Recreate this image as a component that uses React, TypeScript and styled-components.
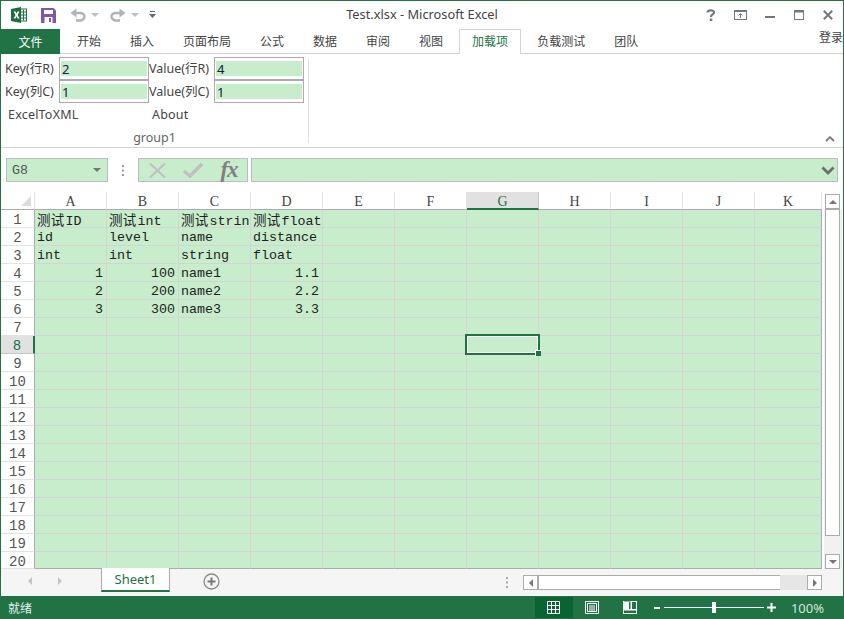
import styled, { createGlobalStyle } from "styled-components"

const GREEN = "#217346"
const CELL = "#c7edcc"
const EDGE = "#ababab"
const LINE = "#d4d4d4"

const GlobalStyle = createGlobalStyle`
  html, body {
    margin: 0;
    padding: 0;
    background: #fff;
    overflow: hidden;
  }
`

const Window = styled.div`
  box-sizing: border-box;
  width: 844px;
  height: 619px;
  display: flex;
  flex-direction: column;
  border: 1px solid ${GREEN};
  border-bottom: 0;
  background: #fff;
  overflow: hidden;
  font-family: "Noto Sans", "Noto Sans CJK SC", sans-serif;
  font-size: 12px;
  color: #444;
`

/* title bar */
const TitleBar = styled.div`
  position: relative;
  flex: none;
  height: 28px;
  display: flex;
  align-items: center;
  padding-left: 10px;
`
const Quick = styled.div`
  display: flex;
  align-items: center;
`
const QuickSlot = styled.div<{ $w: number }>`
  width: ${(p) => p.$w}px;
  height: 28px;
  display: flex;
  align-items: center;
`
const Title = styled.div`
  position: absolute;
  left: 0;
  right: 0;
  top: 5px;
  text-align: center;
  font-size: 12.8px;
  line-height: 17px;
  color: #444;
`
const WinButtons = styled.div`
  margin-left: auto;
  display: flex;
  align-items: center;
`
const WinButton = styled.div`
  width: 29.4px;
  height: 28px;
  display: flex;
  align-items: center;
  justify-content: center;
`

/* tab strip */
const TabStrip = styled.div`
  position: relative;
  flex: none;
  box-sizing: border-box;
  height: 25px;
  display: flex;
  gap: 1px;
  border-bottom: 1px solid ${LINE};
`
const FileTab = styled.div`
  width: 59px;
  height: 25px;
  margin-right: 2px;
  background: ${GREEN};
  color: #fff;
  display: flex;
  align-items: center;
  justify-content: center;
`
const Tab = styled.div<{ $active?: boolean }>`
  box-sizing: border-box;
  height: ${(p) => (p.$active ? 25 : 24)}px;
  padding: 0 ${(p) => (p.$active ? 12 : 14)}px;
  display: flex;
  align-items: center;
  position: relative;
  background: #fff;
  color: ${(p) => (p.$active ? GREEN : "#444")};
  border: 1px solid ${(p) => (p.$active ? LINE : "transparent")};
  border-bottom: 0;
  margin: 0 ${(p) => (p.$active ? 1 : -1)}px;
  line-height: 24px;
`
const Login = styled.div`
  position: absolute;
  right: -1px;
  top: 0;
  width: 25px;
  overflow: hidden;
  white-space: nowrap;
  line-height: 17px;
`

/* ribbon */
const Ribbon = styled.div`
  position: relative;
  flex: none;
  box-sizing: border-box;
  height: 94px;
  border-bottom: 1px solid ${LINE};
  padding-top: 4px;
  font-size: 12.5px;
`
const Group = styled.div`
  box-sizing: border-box;
  width: 308px;
  height: 85px;
  border-right: 1px solid #e1e1e1;
  display: flex;
  flex-direction: column;
`
const FieldRows = styled.div`
  display: grid;
  grid-template-columns: 58px 90px 65px 90px;
  grid-auto-rows: 23px;
  margin-top: -1px;
`
const FieldLabel = styled.div<{ $indent: number }>`
  padding-left: ${(p) => p.$indent}px;
  line-height: 23px;
  white-space: nowrap;
`
const FieldBox = styled.div`
  box-sizing: border-box;
  border: 1px solid ${EDGE};
  padding: 3px 1px 3px 1px;
  background: #fff;
`
const FieldValue = styled.div`
  height: 15px;
  background: ${CELL};
  padding-left: 1px;
  font-size: 13px;
  line-height: 16px;
  color: #123;
`
const Actions = styled.div`
  display: flex;
  margin-top: 3px;
  height: 18px;
  line-height: 18px;
  letter-spacing: 0.2px;
`
const ActionButton = styled.div<{ $w: number; $indent: number }>`
  width: ${(p) => p.$w}px;
  padding-left: ${(p) => p.$indent}px;
  box-sizing: border-box;
`
const GroupName = styled.div`
  margin-top: 6px;
  text-align: center;
  color: #666;
  line-height: 16px;
`
const Collapse = styled.div`
  position: absolute;
  right: 8px;
  bottom: 5px;
  display: flex;
`

/* formula bar */
const FormulaBar = styled.div`
  flex: none;
  box-sizing: border-box;
  height: 44px;
  padding: 10px 5px 10px 5px;
  display: flex;
  align-items: stretch;
`
const Boxed = styled.div`
  box-sizing: border-box;
  border: 1px solid #bdbdbd;
  background: ${CELL};
  display: flex;
  align-items: center;
`
const NameBox = styled(Boxed)`
  width: 102px;
  padding: 0 6px 0 5px;
  justify-content: space-between;
  font-family: "Liberation Mono", monospace;
  font-size: 13.33px;
  color: #555;
`
const Grip = styled.div`
  width: 30px;
  display: flex;
  align-items: center;
  justify-content: center;
`
const FormulaButtons = styled(Boxed)`
  width: 110px;
`
const FxButton = styled.div`
  width: 36px;
  display: flex;
  justify-content: center;
  align-items: center;
`
const FxText = styled.span`
  font-family: "Liberation Serif", serif;
  font-style: italic;
  font-weight: 700;
  font-size: 23px;
  line-height: 22px;
  color: #808080;
  letter-spacing: -1px;
`
const FormulaInput = styled(Boxed)`
  flex: 1;
  margin-left: 3px;
  justify-content: flex-end;
  padding-right: 2px;
`

/* sheet */
const SheetArea = styled.div`
  flex: none;
  height: 377px;
  display: flex;
`
const SheetGrid = styled.div`
  display: grid;
  grid-template-columns: 34px repeat(10, 72px) 67px;
  grid-template-rows: repeat(20, 18px) 17px;
  width: 821px;
  flex: none;
  font-family: "Liberation Mono", "Noto Sans CJK SC", monospace;
  font-size: 13.33px;
  color: #222;
`
const Corner = styled.div`
  box-sizing: border-box;
  border-right: 1px solid #e0e0e0;
  border-bottom: 1px solid ${EDGE};
  display: flex;
  justify-content: flex-end;
  align-items: flex-end;
  padding: 0 3px 3px 0;
`
const ColHead = styled.div<{ $active?: boolean }>`
  box-sizing: border-box;
  text-align: center;
  font-family: "Liberation Serif", serif;
  font-size: 14px;
  line-height: 14px;
  padding-top: 3px;
  color: ${(p) => (p.$active ? GREEN : "#444")};
  background: ${(p) => (p.$active ? "#e1e1e1" : "#fff")};
  border-bottom: ${(p) => (p.$active ? `2px solid ${GREEN}` : `1px solid ${EDGE}`)};
  border-right: 1px solid ${(p) => (p.$active ? "#c6c6c6" : "#e3e3e3")};
`
const RowHead = styled.div<{ $active?: boolean }>`
  box-sizing: border-box;
  text-align: center;
  font-size: 14px;
  line-height: 14px;
  padding-top: 3px;
  color: ${(p) => (p.$active ? GREEN : "#555")};
  background: ${(p) => (p.$active ? "#e1e1e1" : "#fff")};
  border-right: ${(p) => (p.$active ? `2px solid ${GREEN}` : `1px solid ${EDGE}`)};
  border-bottom: 1px solid ${(p) => (p.$active ? "#c6c6c6" : "#e3e3e3")};
`
const Cell = styled.div<{ $right?: boolean; $lastCol?: boolean; $lastRow?: boolean }>`
  position: relative;
  box-sizing: border-box;
  background: ${CELL};
  border-right: 1px solid ${(p) => (p.$lastCol ? EDGE : LINE)};
  border-bottom: 1px solid ${(p) => (p.$lastRow ? EDGE : LINE)};
  line-height: 14px;
  white-space: nowrap;
  padding: ${(p) => (p.$right ? "3px 3px 0 0" : "3px 0 0 2px")};
  text-align: ${(p) => (p.$right ? "right" : "left")};
`
const Cjk = styled.span`
  font-family: "Noto Sans CJK SC", sans-serif;
  font-size: 13.5px;
  line-height: 1;
  letter-spacing: 0.25px;
  margin-right: 1px;
`
const Selection = styled.div`
  position: absolute;
  left: -2px;
  top: -2px;
  width: 75px;
  height: 21px;
  box-sizing: border-box;
  border: 2px solid ${GREEN};
  outline: 1px solid #fff;
  outline-offset: -3px;
  z-index: 2;
  &::after {
    content: "";
    position: absolute;
    right: -3px;
    bottom: -3px;
    width: 5px;
    height: 5px;
    background: ${GREEN};
    border: 1px solid #fff;
    border-width: 1px 0 0 1px;
  }
`

/* vertical scrollbar */
const VScroll = styled.div`
  width: 21px;
  display: flex;
  flex-direction: column;
  padding: 2px 0 0 3px;
  box-sizing: border-box;
`
const ScrollTrack = styled.div`
  width: 15px;
  flex: 1;
  display: flex;
  flex-direction: column;
  background: #f1f1f1;
  box-shadow: -1px 0 0 #f1f1f1, 2px 0 0 #f1f1f1;
`
const ScrollThumb = styled.div`
  box-sizing: border-box;
  height: 327px;
  border: 1px solid ${EDGE};
  background: #fff;
`
const ScrollBtn = styled.div`
  box-sizing: border-box;
  width: 15px;
  height: 15px;
  border: 1px solid ${EDGE};
  background: #fff;
  flex: none;
  display: flex;
  align-items: center;
  justify-content: center;
`
const Spacer = styled.div`
  flex: 1;
`

/* sheet tabs */
const SheetBar = styled.div`
  flex: none;
  height: 27px;
  background: #f5f5f5;
  display: flex;
  align-items: flex-start;
  position: relative;
`
const NavArrows = styled.div`
  width: 100px;
  height: 24px;
  display: flex;
  align-items: center;
  padding-left: 26px;
  gap: 24px;
  box-sizing: border-box;
`
const SheetTab = styled.div`
  box-sizing: border-box;
  width: 69px;
  height: 24px;
  background: #fff;
  border-left: 1px solid ${EDGE};
  border-right: 1px solid ${EDGE};
  border-bottom: 2px solid ${GREEN};
  color: ${GREEN};
  font-size: 13px;
  line-height: 22px;
  text-align: center;
  margin-top: -1px;
`
const AddSheet = styled.div`
  width: 42px;
  margin-left: 33px;
  height: 24px;
  display: flex;
  align-items: center;
`
const HScrollWrap = styled.div`
  margin-left: auto;
  margin-right: 21px;
  display: flex;
  align-items: center;
  margin-top: 6px;
`
const HGrip = styled.div`
  width: 17px;
  height: 15px;
  display: flex;
  align-items: center;
`
const HScroll = styled.div`
  box-sizing: border-box;
  width: 299px;
  height: 15px;
  display: flex;
  background: #e6e6e6;
`
const HThumb = styled.div`
  box-sizing: border-box;
  width: 242px;
  height: 15px;
  background: #fff;
  border: 1px solid ${EDGE};
  border-right: 0;
`

/* status bar */
const StatusBar = styled.div`
  flex: none;
  height: 23px;
  margin: 0 -1px;
  background: ${GREEN};
  color: #fff;
  display: flex;
  align-items: center;
  padding-left: 8px;
`
const StatusText = styled.div`
  color: #e4efe9;
`
const StatusRight = styled.div`
  margin-left: auto;
  display: flex;
  align-items: center;
  height: 23px;
  padding-right: 20px;
`
const ViewButton = styled.div<{ $active?: boolean }>`
  width: 38px;
  height: 21px;
  display: flex;
  align-items: center;
  justify-content: center;
  background: ${(p) => (p.$active ? "#0a6332" : "transparent")};
`
const ZoomRow = styled.div`
  display: flex;
  align-items: center;
  margin-left: 4px;
`
const ZoomLine = styled.div`
  position: relative;
  width: 100px;
  height: 1px;
  margin: 0 3px 0 3px;
  background: #fff;
`
const ZoomThumb = styled.div`
  position: absolute;
  left: 48px;
  top: -5px;
  width: 4px;
  height: 11px;
  background: #fff;
`
const ZoomPercent = styled.div`
  margin-left: 15px;
  font-size: 13px;
  color: #d5e5dc;
`

const columns = ["A", "B", "C", "D", "E", "F", "G", "H", "I", "J", "K"]

type CellValue = { text: string; cjk?: string; right?: boolean }

const sheet: Record<string, CellValue> = {
  A1: { cjk: "测试", text: "ID" },
  B1: { cjk: "测试", text: "int" },
  C1: { cjk: "测试", text: "strin" },
  D1: { cjk: "测试", text: "float" },
  A2: { text: "id" },
  B2: { text: "level" },
  C2: { text: "name" },
  D2: { text: "distance" },
  A3: { text: "int" },
  B3: { text: "int" },
  C3: { text: "string" },
  D3: { text: "float" },
  A4: { text: "1", right: true },
  B4: { text: "100", right: true },
  C4: { text: "name1" },
  D4: { text: "1.1", right: true },
  A5: { text: "2", right: true },
  B5: { text: "200", right: true },
  C5: { text: "name2" },
  D5: { text: "2.2", right: true },
  A6: { text: "3", right: true },
  B6: { text: "300", right: true },
  C6: { text: "name3" },
  D6: { text: "3.3", right: true },
}

const ribbonTabs = ["开始", "插入", "页面布局", "公式", "数据", "审阅", "视图", "加载项", "负载测试", "团队"]
const rowNumbers = Array.from({ length: 20 }, (_, i) => i + 1)

function Triangle({ dir, color = "#777" }: { dir: "up" | "down" | "left" | "right"; color?: string }) {
  const points = {
    up: "0,5 8,5 4,1",
    down: "0,1 8,1 4,5",
    left: "5,0 5,8 1,4",
    right: "1,0 1,8 5,4",
  }[dir]
  const size = dir === "up" || dir === "down" ? { w: 8, h: 6 } : { w: 6, h: 8 }
  return (
    <svg width={size.w} height={size.h} viewBox={`0 0 ${size.w} ${size.h}`}>
      <polygon points={points} fill={color} />
    </svg>
  )
}

function ExcelLogo() {
  return (
    <svg width="16" height="16" viewBox="0 0 16 16">
      <rect x="7" y="2" width="8.500" height="12" fill="#fff" stroke="#217346" />
      <path d="M10 5h5M10 8h5M10 11h5M12.500 2.500v11" stroke="#217346" strokeWidth="1" />
      <path d="M0 2 10 0v16L0 14z" fill="#1a6e42" />
      <path d="M2.600 4.600h2l1 2 1-2h1.900L6.700 8l1.900 3.400H6.600L5.500 9.200l-1 2.200H2.600L4.500 8z" fill="#fff" />
    </svg>
  )
}

function SaveIcon() {
  return (
    <svg width="15" height="15" viewBox="0 0 15 15">
      <path d="M0 0h12.500L15 2.500V15H0z" fill="#7e57a5" />
      <rect x="3" y="2" width="9" height="4" fill="#fff" />
      <rect x="3.500" y="9" width="8" height="6" fill="#fff" />
      <rect x="8" y="10" width="2" height="4" fill="#7e57a5" />
    </svg>
  )
}

function UndoIcon({ flip }: { flip?: boolean }) {
  return (
    <svg width="16" height="14" viewBox="0 0 16 14" style={flip ? { transform: "scaleX(-1)" } : undefined}>
      <path d="M2 5h8c3 0 4.500 1.500 4.500 3.500S12.500 12.500 10 12.500H6" fill="none" stroke="#b3b3b3" strokeWidth="2.400" />
      <path d="M6.500 0.500v9L0.500 5z" fill="#b3b3b3" />
    </svg>
  )
}

function App() {
  return (
    <Window>
      <GlobalStyle />
      <TitleBar>
        <Quick>
          <QuickSlot $w={30}>
            <ExcelLogo />
          </QuickSlot>
          <QuickSlot $w={29}>
            <SaveIcon />
          </QuickSlot>
          <QuickSlot $w={21}>
            <UndoIcon />
          </QuickSlot>
          <QuickSlot $w={19}>
            <Triangle dir="down" color="#bdbdbd" />
          </QuickSlot>
          <QuickSlot $w={21}>
            <UndoIcon flip />
          </QuickSlot>
          <QuickSlot $w={18}>
            <Triangle dir="down" color="#bdbdbd" />
          </QuickSlot>
          <QuickSlot $w={10}>
            <svg width="7" height="8" viewBox="0 0 7 8">
              <path d="M1 0.500h5" stroke="#666" />
              <polygon points="0,3 7,3 3.500,7" fill="#666" />
            </svg>
          </QuickSlot>
        </Quick>
        <Title>Test.xlsx - Microsoft Excel</Title>
        <WinButtons>
          <WinButton>
            <svg width="10" height="12" viewBox="0 0 10 12">
              <path d="M1.500 3.500C1.500 1 8 0.500 8 3.500 8 5.500 5 5.500 5 8" fill="none" stroke="#777" strokeWidth="2.200" />
              <rect x="3.800" y="9.500" width="2.500" height="2.500" fill="#777" />
            </svg>
          </WinButton>
          <WinButton>
            <svg width="13" height="10" viewBox="0 0 13 10">
              <rect x="0.500" y="0.500" width="12" height="9" fill="none" stroke="#777" />
              <path d="M1 1.500h11" stroke="#777" />
              <path d="M6.500 8V4M4.500 5.500l2-2 2 2" fill="none" stroke="#777" />
            </svg>
          </WinButton>
          <WinButton>
            <svg width="10" height="12" viewBox="0 0 10 12">
              <rect x="0" y="7" width="10" height="2" fill="#777" />
            </svg>
          </WinButton>
          <WinButton>
            <svg width="10" height="10" viewBox="0 0 10 10">
              <rect x="0.500" y="0.500" width="9" height="9" fill="none" stroke="#777" />
              <rect x="0" y="0" width="10" height="2.500" fill="#777" />
            </svg>
          </WinButton>
          <WinButton>
            <svg width="10" height="10" viewBox="0 0 10 10">
              <path d="M0.800 0.800 9.200 9.200M9.200 0.800 0.800 9.200" stroke="#777" strokeWidth="2" />
            </svg>
          </WinButton>
        </WinButtons>
      </TitleBar>

      <TabStrip>
        <FileTab>文件</FileTab>
        {ribbonTabs.map((t) => (
          <Tab key={t} $active={t === "加载项"}>
            {t}
          </Tab>
        ))}
        <Login>登录</Login>
      </TabStrip>

      <Ribbon>
        <Group>
          <FieldRows>
            <FieldLabel $indent={4}>Key(行R)</FieldLabel>
            <FieldBox>
              <FieldValue>2</FieldValue>
            </FieldBox>
            <FieldLabel $indent={0}>Value(行R)</FieldLabel>
            <FieldBox>
              <FieldValue>4</FieldValue>
            </FieldBox>
            <FieldLabel $indent={4}>Key(列C)</FieldLabel>
            <FieldBox>
              <FieldValue>1</FieldValue>
            </FieldBox>
            <FieldLabel $indent={0}>Value(列C)</FieldLabel>
            <FieldBox>
              <FieldValue>1</FieldValue>
            </FieldBox>
          </FieldRows>
          <Actions>
            <ActionButton $w={151} $indent={7}>
              ExcelToXML
            </ActionButton>
            <ActionButton $w={60} $indent={0}>
              About
            </ActionButton>
          </Actions>
          <GroupName>group1</GroupName>
        </Group>
        <Collapse>
          <svg width="10" height="6" viewBox="0 0 10 6">
            <path d="M1 5 5 1.200 9 5" fill="none" stroke="#777" strokeWidth="1.800" />
          </svg>
        </Collapse>
      </Ribbon>

      <FormulaBar>
        <NameBox>
          G8
          <Triangle dir="down" color="#777" />
        </NameBox>
        <Grip>
          <svg width="3" height="11" viewBox="0 0 3 11">
            <path d="M0 0h2v2H0zM0 4.500h2v2H0zM0 9h2v2H0z" fill="#999" />
          </svg>
        </Grip>
        <FormulaButtons>
          <FxButton>
            <svg width="17" height="15" viewBox="0 0 17 15">
              <path d="M1 0.500 16 14.500M16 0.500 1 14.500" stroke="#c0c0c0" strokeWidth="2" />
            </svg>
          </FxButton>
          <FxButton>
            <svg width="20" height="15" viewBox="0 0 20 15">
              <path d="M1 8l6 5L19 1" fill="none" stroke="#c0c0c0" strokeWidth="3.500" />
            </svg>
          </FxButton>
          <FxButton>
            <FxText>fx</FxText>
          </FxButton>
        </FormulaButtons>
        <FormulaInput>
          <svg width="14" height="9" viewBox="0 0 14 9">
            <path d="M1.500 1.500 7 7l5.500-5.500" fill="none" stroke="#6e6e6e" strokeWidth="2.800" />
          </svg>
        </FormulaInput>
      </FormulaBar>

      <SheetArea>
        <SheetGrid>
          <Corner>
            <svg width="10" height="10" viewBox="0 0 10 10">
              <polygon points="10,0 10,10 0,10" fill="#dcdcdc" />
            </svg>
          </Corner>
          {columns.map((c) => (
            <ColHead key={c} $active={c === "G"}>
              {c}
            </ColHead>
          ))}
          {rowNumbers.map((row) => [
            <RowHead key={`h${row}`} $active={row === 8}>
              {row}
            </RowHead>,
            ...columns.map((c) => {
              const value = sheet[`${c}${row}`]
              return (
                <Cell key={`${c}${row}`} $right={value?.right} $lastCol={c === "K"} $lastRow={row === 20}>
                  {value?.cjk && <Cjk>{value.cjk}</Cjk>}
                  {value?.text}
                  {c === "G" && row === 8 && <Selection />}
                </Cell>
              )
            }),
          ])}
        </SheetGrid>
        <VScroll>
          <ScrollBtn>
            <Triangle dir="up" />
          </ScrollBtn>
          <ScrollTrack>
            <ScrollThumb />
            <Spacer />
            <ScrollBtn>
              <Triangle dir="down" />
            </ScrollBtn>
          </ScrollTrack>
        </VScroll>
      </SheetArea>

      <SheetBar>
        <NavArrows>
          <Triangle dir="left" color="#c4c4c4" />
          <Triangle dir="right" color="#c4c4c4" />
        </NavArrows>
        <SheetTab>Sheet1</SheetTab>
        <AddSheet>
          <svg width="17" height="17" viewBox="0 0 17 17">
            <circle cx="8.500" cy="8.500" r="7.500" fill="none" stroke="#8a8a8a" strokeWidth="1.300" />
            <path d="M8.500 4.500v8M4.500 8.500h8" stroke="#777" strokeWidth="2" />
          </svg>
        </AddSheet>
        <HScrollWrap>
          <HGrip>
            <svg width="3" height="11" viewBox="0 0 3 11">
              <path d="M0 0h2v2H0zM0 4.500h2v2H0zM0 9h2v2H0z" fill="#aaa" />
            </svg>
          </HGrip>
          <HScroll>
            <ScrollBtn>
              <Triangle dir="left" />
            </ScrollBtn>
            <HThumb />
            <Spacer />
            <ScrollBtn>
              <Triangle dir="right" />
            </ScrollBtn>
          </HScroll>
        </HScrollWrap>
      </SheetBar>

      <StatusBar>
        <StatusText>就绪</StatusText>
        <StatusRight>
          <ViewButton $active>
            <svg width="13" height="13" viewBox="0 0 13 13">
              <path d="M0.500 0.500h12v12h-12zM0.500 4.500h12M0.500 8.500h12M4.500 0.500v12M8.500 0.500v12" fill="none" stroke="#fff" />
            </svg>
          </ViewButton>
          <ViewButton>
            <svg width="14" height="13" viewBox="0 0 14 13">
              <path d="M0.500 0.500h13v12h-13z" fill="none" stroke="#fff" />
              <path d="M2.500 2.500h9v8h-9zM4 5h6M4 7h6M4 9h6" fill="none" stroke="#fff" />
            </svg>
          </ViewButton>
          <ViewButton>
            <svg width="14" height="13" viewBox="0 0 14 13">
              <path d="M0 0h14v13H0z" fill="#fff" />
              <path d="M6 0.500h1.500V8H1v-7.500zM9 1h4v7H9z" fill={GREEN} />
              <path d="M1 1h5v7H1z" fill="#fff" />
              <path d="M1 9.500h12V12H1z" fill={GREEN} />
            </svg>
          </ViewButton>
          <ZoomRow>
            <svg width="8" height="8" viewBox="0 0 8 8">
              <rect x="1" y="3" width="6" height="2" fill="#fff" />
            </svg>
            <ZoomLine>
              <ZoomThumb />
            </ZoomLine>
            <svg width="9" height="9" viewBox="0 0 9 9">
              <path d="M0 3.500h9v2H0zM3.500 0h2v9h-2z" fill="#fff" />
            </svg>
          </ZoomRow>
          <ZoomPercent>100%</ZoomPercent>
        </StatusRight>
      </StatusBar>
    </Window>
  )
}

export default App
